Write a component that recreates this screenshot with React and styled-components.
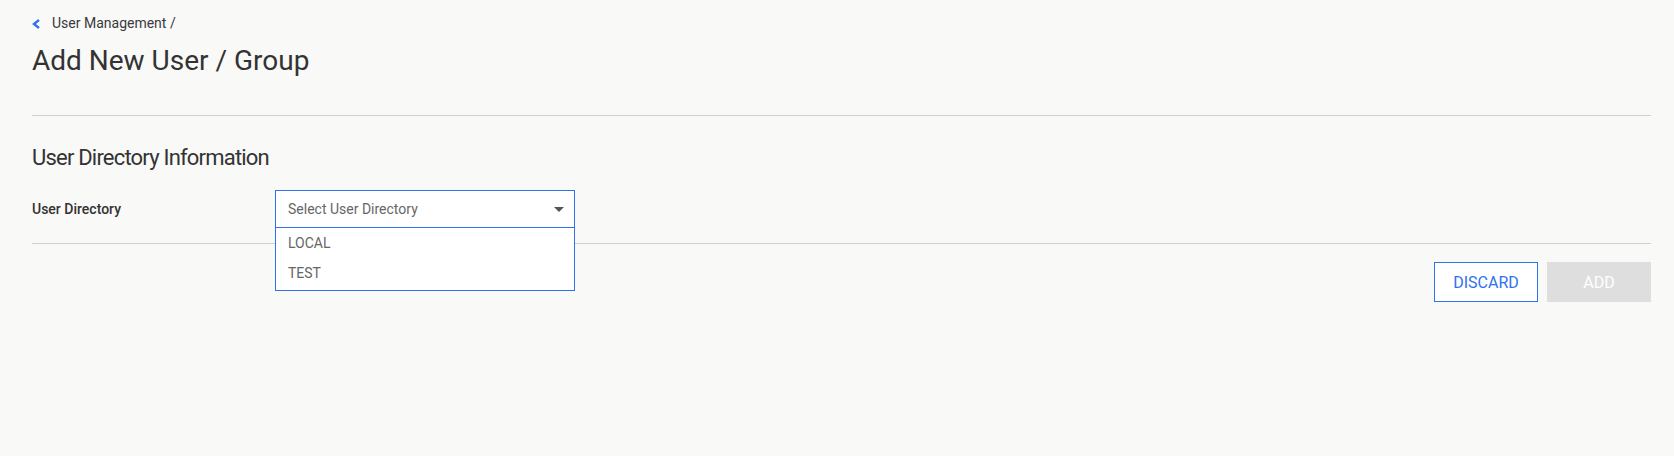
import React from 'react';
import styled, { createGlobalStyle } from 'styled-components';

const blue = '#2f72ee';
const textDark = '#333333';
const lineColor = '#d0d0d0';

const GlobalStyle = createGlobalStyle`
  body {
    margin: 0;
    background-color: #f9f9f8;
    font-family: Roboto, 'Liberation Sans', sans-serif;
    color: ${textDark};
  }
`;

const Page = styled.div`
  padding: 14px 23px 0 32px;
`;

const Breadcrumb = styled.div`
  display: flex;
  align-items: center;
  font-size: 14px;
  line-height: 19px;
  color: #3a3a3a;

  svg {
    margin-right: 11px;
  }
`;

const Title = styled.h1`
  margin: 10px 0 0;
  font-size: 28px;
  line-height: 36px;
  font-weight: 400;
  color: ${textDark};
`;

const Divider = styled.hr`
  border: none;
  height: 1px;
  background-color: ${lineColor};
  margin: ${(p) => p.$top}px 0 0;
`;

const SectionTitle = styled.h2`
  margin: 28px 0 0;
  font-size: 22px;
  line-height: 28px;
  letter-spacing: -0.8px;
  font-weight: 400;
  color: ${textDark};
`;

const FormRow = styled.div`
  display: grid;
  grid-template-columns: 243px 300px;
  align-items: center;
  margin-top: 18px;
`;

const Label = styled.label`
  font-size: 14px;
  font-weight: 500;
  color: ${textDark};
`;

const SelectWrap = styled.div`
  position: relative;
`;

const SelectHeader = styled.div`
  display: flex;
  align-items: center;
  justify-content: space-between;
  box-sizing: border-box;
  height: 38px;
  padding: 0 10px 0 12px;
  background-color: #fff;
  border: 1px solid ${blue};
  font-size: 14px;
  color: #666;
  cursor: pointer;
`;

const OptionList = styled.ul`
  position: absolute;
  top: 100%;
  left: 0;
  right: 0;
  z-index: 2;
  margin: 0;
  padding: 0 0 2px;
  list-style: none;
  background-color: #fff;
  border: 1px solid ${blue};
  border-top: none;
`;

const Option = styled.li`
  height: 30px;
  line-height: 30px;
  padding: 0 12px;
  font-size: 14px;
  color: #666;
`;

const Actions = styled.div`
  display: flex;
  justify-content: flex-end;
  gap: 9px;
  margin-top: 18px;
`;

const Button = styled.button`
  box-sizing: border-box;
  width: 104px;
  height: 40px;
  font-family: Roboto, 'Liberation Sans', sans-serif;
  font-size: 16px;
  text-transform: uppercase;
  background-color: ${(p) => (p.$outline ? '#fff' : '#dedede')};
  color: ${(p) => (p.$outline ? blue : '#fff')};
  border: ${(p) => (p.$outline ? `1px solid ${blue}` : 'none')};
  cursor: ${(p) => (p.disabled ? 'default' : 'pointer')};
`;

const Chevron = () => (
  <svg width="9" height="10" viewBox="0 0 9 10">
    <path d="M7 1 L2 5 L7 9" fill="none" stroke={blue} strokeWidth="2.4" />
  </svg>
);

const Caret = () => (
  <svg width="10" height="5" viewBox="0 0 10 5">
    <path d="M0 0 L10 0 L5 5 Z" fill="#555" />
  </svg>
);

const App = () => (
  <>
    <GlobalStyle />
    <Page>
      <Breadcrumb>
        <Chevron />
        <span>User Management /</span>
      </Breadcrumb>
      <Title>Add New User / Group</Title>
      <Divider $top={36} />

      <SectionTitle>User Directory Information</SectionTitle>
      <FormRow>
        <Label>User Directory</Label>
        <SelectWrap>
          <SelectHeader>
            <span>Select User Directory</span>
            <Caret />
          </SelectHeader>
          <OptionList>
            <Option>LOCAL</Option>
            <Option>TEST</Option>
          </OptionList>
        </SelectWrap>
      </FormRow>
      <Divider $top={15} />

      <Actions>
        <Button $outline>Discard</Button>
        <Button disabled>Add</Button>
      </Actions>
    </Page>
  </>
);

export default App;
